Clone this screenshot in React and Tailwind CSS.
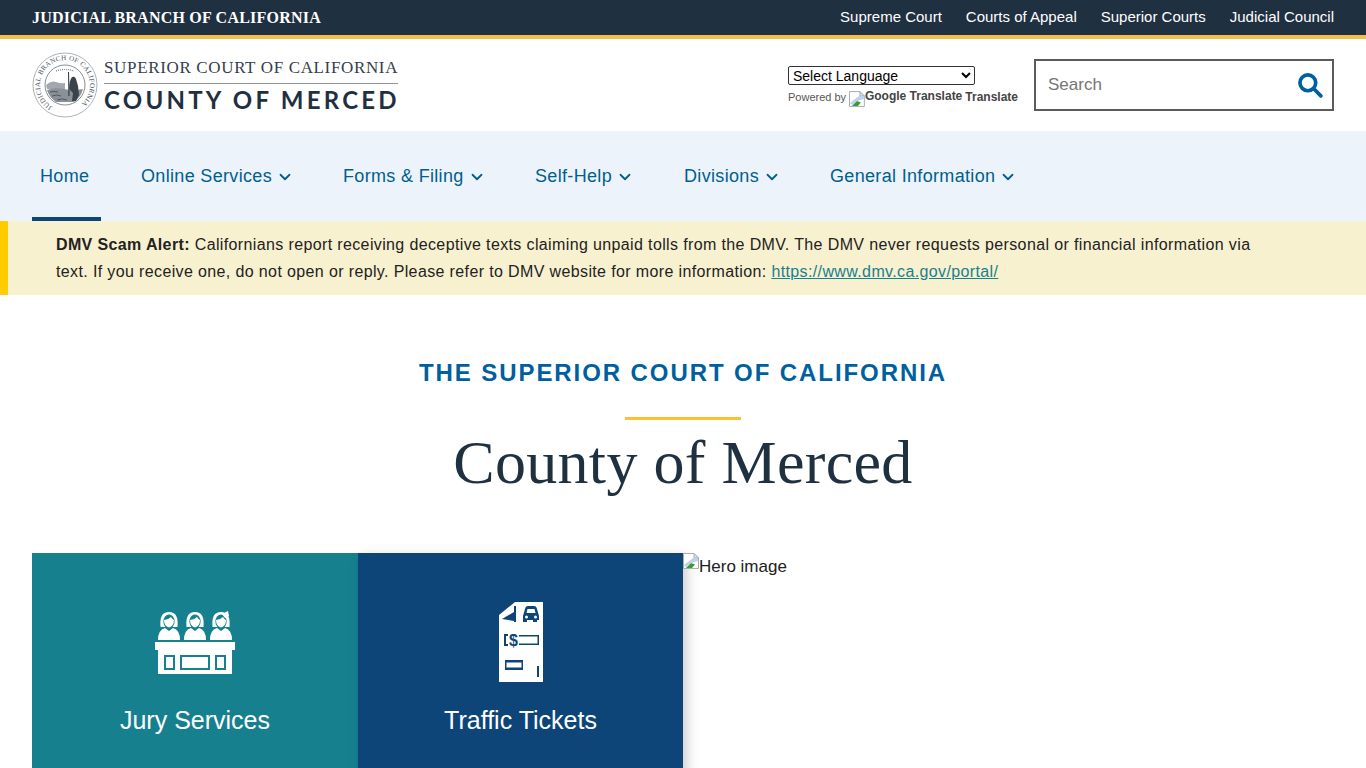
import { ChevronDown } from "lucide-react";

const courtLinks = ["Supreme Court", "Courts of Appeal", "Superior Courts", "Judicial Council"];

const navItems = [
  { label: "Online Services", width: "w-[202px]" },
  { label: "Forms & Filing", width: "w-[192px]" },
  { label: "Self-Help", width: "w-[149px]" },
  { label: "Divisions", width: "w-[146px]" },
  { label: "General Information", width: "w-[209px]" },
];

function BrokenImage({ className }) {
  return (
    <svg viewBox="0 0 16 16" className={className}>
      <path d="M.5.5H11L15.5 5v10.5H.5z" fill="#fff" stroke="#a9adb3" />
      <path d="M11 .5V5h4.5z" fill="#dfe3e8" stroke="#a9adb3" />
      <path d="M1 12L10 5h5v3l-7 2-5 4z" fill="#bcd0f2" />
      <path d="M3 15l5-5 4 1.500L9 15z" fill="#3f9a35" />
    </svg>
  );
}

function Seal() {
  return (
    <svg viewBox="0 0 66 66" className="w-[66px] h-[66px] shrink-0">
      <circle cx="33" cy="33" r="32" fill="#fff" stroke="#8a9096" strokeWidth="0.7" />
      <circle cx="33" cy="33" r="20" fill="#fff" stroke="#6a7178" strokeWidth="0.8" />
      <defs>
        <path id="sealRing" d="M20.500 54.650A25 25 0 1 1 45.500 54.650" />
      </defs>
      <text fontSize="7" fill="#4a525a" fontFamily="Liberation Serif, serif" letterSpacing="0.3">
        <textPath href="#sealRing">JUDICIAL BRANCH OF CALIFORNIA</textPath>
      </text>
      <path d="M24 19q9-3 18 0" fill="none" stroke="#7b828a" strokeWidth="1.200" strokeDasharray="1 1" />
      <path d="M14 33q5-5 10-3t9 1v6H15z" fill="#a2a8ae" />
      <path d="M15 38q8-3 17-1t19 0q-2 8-9 13H24q-7-5-9-12z" fill="#8b9198" />
      <path d="M20 44q5-2 9 0M25 48q6-2 10 0M18 40q4-1 8 0" stroke="#40474e" strokeWidth="0.800" fill="none" />
      <path d="M36 20l1 0 .6 24h-1.200z" fill="#333a41" />
      <path d="M40 25q3-1 4 2l2 7 1 9-3 6h-4l1-8-4-4q0-8 3-12z" fill="#3b434b" />
    </svg>
  );
}

function JuryPerson({ x }) {
  return (
    <g transform={`translate(${x} 0)`}>
      <path d="M0 29q0-10 7-12l4 3 4-3q7 2 7 12z" fill="#fff" />
      <path d="M2.500 16Q1 1 11 1t8.500 15z" fill="#fff" />
      <ellipse cx="11" cy="10.500" rx="5.600" ry="7" fill="#17808f" />
      <path d="M6 9q4 0 7-3 1 2 3 3 0 6-5 7.500-5-1.500-5-7.500z" fill="#fff" />
    </g>
  );
}

function JuryIcon() {
  return (
    <svg viewBox="0 0 80 63" className="w-[80px] h-[63px]">
      <JuryPerson x={3} />
      <JuryPerson x={29} />
      <JuryPerson x={55} />
      <path d="M67 3l6-3 1 5-4 2z" fill="#fff" />
      <rect x="0" y="31" width="80" height="8" fill="#fff" />
      <rect x="3" y="39" width="74" height="24" fill="#fff" />
      <rect x="10" y="45" width="9" height="13" fill="none" stroke="#17808f" strokeWidth="2" />
      <rect x="26" y="45" width="28" height="13" fill="none" stroke="#17808f" strokeWidth="2" />
      <rect x="61" y="45" width="9" height="13" fill="none" stroke="#17808f" strokeWidth="2" />
    </svg>
  );
}

function TicketIcon() {
  return (
    <svg viewBox="0 0 44 80" className="w-[44px] h-[80px]">
      <path d="M16 0H44V80H0V13z" fill="#fff" />
      <path d="M3 17L15 10V4h2v16h-2v-1z" fill="#0d4579" />
      <path d="M24 14l2-7q.6-3 3-3h6q2.400 0 3 3l2 7v4h-2v2h-4v-2h-6v2h-4z" fill="#0d4579" />
      <path d="M28.500 7h7l1 4h-9z" fill="#fff" />
      <circle cx="27.500" cy="15" r="1.500" fill="#fff" />
      <circle cx="36.500" cy="15" r="1.500" fill="#fff" />
      <path d="M5 32h4v2H7v8h2v2H5z" fill="#0d4579" />
      <text x="10" y="44" fontSize="16" fontWeight="700" fill="#0d4579" fontFamily="Liberation Sans, sans-serif">$</text>
      <path d="M20 33h20v10H20v-1.500h18.500v-7H20z" fill="#0d4579" />
      <path d="M6 58h18v10H6z" fill="#0d4579" />
      <path d="M7.500 60.500h15v5h-15z" fill="#fff" />
      <rect x="38" y="64" width="2" height="11" fill="#0d4579" />
    </svg>
  );
}

export default function App() {
  return (
    <div className="h-[768px] overflow-hidden bg-white text-[#212121] font-['Liberation_Sans',Arial,sans-serif]">
      {/* Barra superior */}
      <div className="h-[39px] bg-[#1f3041] border-b-4 border-[#f2bf4d] flex items-center justify-between pl-8 pr-8 text-white">
        <span className="font-['Liberation_Serif',serif] font-bold text-[16px] tracking-[0.22px]">JUDICIAL BRANCH OF CALIFORNIA</span>
        <div className="flex gap-6 text-[15px]">
          {courtLinks.map((link) => (
            <a key={link} href="#">{link}</a>
          ))}
        </div>
      </div>

      {/* Logo y buscador */}
      <header className="h-[92px] flex items-center justify-between pl-8 pr-8">
        <div className="flex items-center gap-[6px]">
          <Seal />
          <div className="w-[294px] text-[#1f3041]">
            <div className="font-['Liberation_Serif',serif] text-[17px] leading-[22px] tracking-[0.65px] whitespace-nowrap text-[#33404d]">SUPERIOR COURT OF CALIFORNIA</div>
            <div className="h-px bg-[#8d949b] mt-[4px]"></div>
            <div className="font-['Lato',sans-serif] font-bold text-[24px] leading-[28px] tracking-[3.25px] whitespace-nowrap mt-[2px]">COUNTY OF MERCED</div>
          </div>
        </div>
        <div className="flex items-center gap-4">
          <div className="w-[230px] pt-[3px]">
            <select className="block w-[187px] h-[19px] bg-white border border-[#333] rounded-[2px] text-[14px] leading-[17px] text-black">
              <option>Select Language</option>
            </select>
            <div className="flex items-center mt-[2px] text-[11px] leading-[18px] text-[#555] whitespace-nowrap">
              Powered by
              <BrokenImage className="w-4 h-4 ml-[3px] mt-[4px]" />
              <span className="font-bold text-[#444] text-[12px] -mt-[2px]">Google Translate</span>
              <span className="font-bold text-[#444] text-[12px] ml-[3px]">Translate</span>
            </div>
          </div>
          <div className="w-[300px] h-[52px] border-2 border-[#5b5b5b] flex items-center justify-between pl-3 pr-[9px]">
            <span className="text-[17px] text-[#757575]">Search</span>
            <svg viewBox="0 0 24 24" className="w-[26px] h-[26px]" fill="none" stroke="#005f9e" strokeWidth="3.400" strokeLinecap="round">
              <circle cx="10" cy="10" r="7.300" />
              <path d="M15.500 15.500L22 22" />
            </svg>
          </div>
        </div>
      </header>

      {/* Navegacion */}
      <nav className="h-[90px] bg-[#edf3fa] flex pl-8 text-[18px] tracking-[0.33px] text-[#005f8f]">
        <a href="#" className="w-[69px] flex items-center pl-2 border-b-4 border-[#0d4579] pt-[5px]">Home</a>
        <div className="w-[40px]"></div>
        {navItems.map((item) => (
          <a key={item.label} href="#" className={`${item.width} flex items-center gap-1 pt-[1px] whitespace-nowrap`}>
            {item.label}
            <ChevronDown className="w-[18px] h-[18px] mt-[1px]" strokeWidth={2.400} />
          </a>
        ))}
      </nav>

      {/* Aviso */}
      <div className="h-[74px] bg-[#f8f1cf] border-l-8 border-[#ffcc00] pl-12 pt-[10px] text-[16px] leading-[27px] tracking-[0.37px] text-[#222]">
        <p className="w-[1220px]">
          <strong>DMV Scam Alert:</strong> Californians report receiving deceptive texts claiming unpaid tolls from the DMV. The DMV never requests personal or financial information via text. If you receive one, do not open or reply. Please refer to DMV website for more information:{" "}
          <a href="#" className="underline text-[#17808f]">https://www.dmv.ca.gov/portal/</a>
        </p>
      </div>

      {/* Titulo */}
      <section className="flex flex-col items-center pt-[63px]">
        <h2 className="text-[24px] leading-[30px] font-bold tracking-[1.92px] text-[#005f9e]">THE SUPERIOR COURT OF CALIFORNIA</h2>
        <div className="w-[116px] h-[3px] bg-[#fcc133] mt-[29px]"></div>
        <h1 className="font-['Liberation_Serif',serif] text-[62px] leading-[80px] tracking-[0.3px] text-[#1f3041] mt-[2px]">County of Merced</h1>
      </section>

      {/* Accesos */}
      <section className="flex items-start pl-8 mt-[51px]">
        <a href="#" className="w-[326px] h-[260px] bg-[#17808f] text-white flex flex-col items-center pt-[58px]">
          <JuryIcon />
          <span className="text-[25px] leading-[30px] mt-[31px]">Jury Services</span>
        </a>
        <a href="#" className="w-[325px] h-[260px] bg-[#0d4579] text-white flex flex-col items-center pt-[49px] shadow-[4px_4px_12px_rgba(0,0,0,0.2)]">
          <TicketIcon />
          <span className="text-[25px] leading-[30px] mt-[23px]">Traffic Tickets</span>
        </a>
        <div className="flex items-start text-[17px] leading-[28px]">
          <BrokenImage className="w-4 h-4" />
          Hero image
        </div>
      </section>
    </div>
  );
}
